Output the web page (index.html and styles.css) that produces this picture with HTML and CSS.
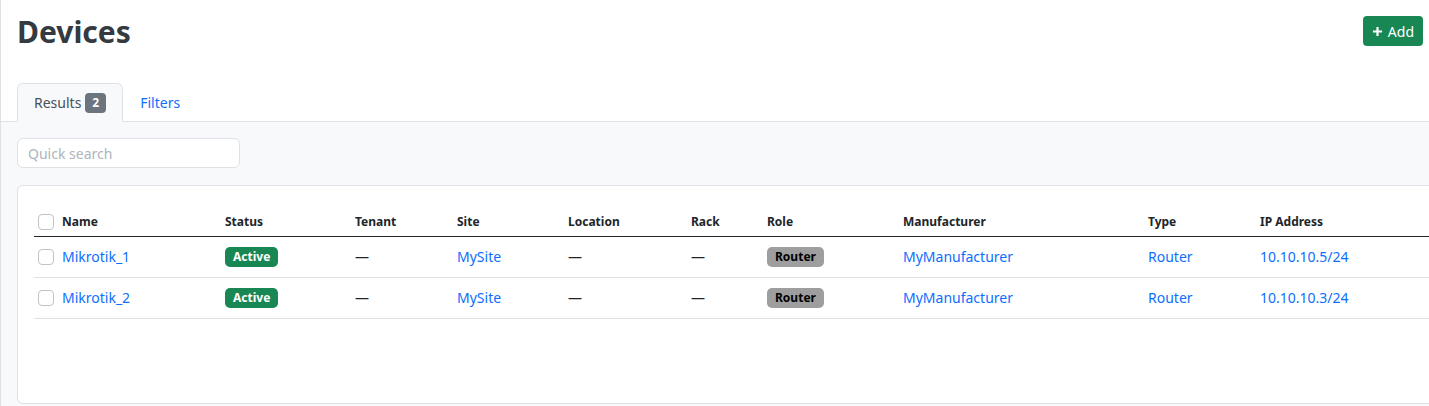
FILE: index.html
```html
<!DOCTYPE html>
<html lang="en">
<head>
<meta charset="utf-8">
<title>Devices</title>
<link rel="stylesheet" href="styles.css">
</head>
<body>
<div class="page">
  <header class="page-header">
    <h1 class="page-title">Devices</h1>
    <a class="btn-add" href="#">
      <svg class="plus" viewBox="0 0 12 12" width="11" height="11"><path d="M6 1v10M1 6h10" stroke="#fff" stroke-width="2.4" fill="none"/></svg>
      <span>Add</span>
    </a>
  </header>
  <nav class="tabs">
    <a class="tab tab-active" href="#">Results <span class="count">2</span></a>
    <a class="tab" href="#">Filters</a>
  </nav>
  <main class="content">
    <input class="search" type="text" placeholder="Quick search">
    <div class="card">
      <table class="devices">
        <colgroup>
          <col class="c-check"><col class="c-name"><col class="c-status"><col class="c-tenant"><col class="c-site"><col class="c-location"><col class="c-rack"><col class="c-role"><col class="c-mfr"><col class="c-type"><col class="c-ip">
        </colgroup>
        <thead>
          <tr>
            <th><span class="cb"></span></th>
            <th>Name</th><th>Status</th><th>Tenant</th><th>Site</th><th>Location</th><th>Rack</th><th>Role</th><th>Manufacturer</th><th>Type</th><th>IP Address</th>
          </tr>
        </thead>
        <tbody>
          <tr>
            <td><span class="cb"></span></td>
            <td><a href="#">Mikrotik_1</a></td>
            <td><span class="badge badge-green">Active</span></td>
            <td>—</td>
            <td><a href="#">MySite</a></td>
            <td>—</td>
            <td>—</td>
            <td><span class="badge badge-gray">Router</span></td>
            <td><a href="#">MyManufacturer</a></td>
            <td><a href="#">Router</a></td>
            <td><a href="#">10.10.10.5/24</a></td>
          </tr>
          <tr>
            <td><span class="cb"></span></td>
            <td><a href="#">Mikrotik_2</a></td>
            <td><span class="badge badge-green">Active</span></td>
            <td>—</td>
            <td><a href="#">MySite</a></td>
            <td>—</td>
            <td>—</td>
            <td><span class="badge badge-gray">Router</span></td>
            <td><a href="#">MyManufacturer</a></td>
            <td><a href="#">Router</a></td>
            <td><a href="#">10.10.10.3/24</a></td>
          </tr>
        </tbody>
      </table>
    </div>
  </main>
</div>
</body>
</html>
```

FILE: styles.css
```css
* { box-sizing: border-box; }
html, body { margin: 0; padding: 0; height: 100%; }
body {
  font-family: "Noto Sans", "Open Sans", sans-serif;
  color: #212529;
  background: #fff;
  overflow: hidden;
  font-size: 14px;
}
.page {
  min-height: 100%;
  border-left: 1px solid #dee2e6;
  display: flex;
  flex-direction: column;
}
.page-header {
  display: flex;
  justify-content: space-between;
  align-items: flex-start;
  padding: 16px 6px 0 16px;
  height: 83px;
}
.page-title {
  margin: 0;
  font-size: 30px;
  font-weight: 700;
  color: #343a40;
  line-height: 32px;
}
.btn-add {
  display: flex;
  align-items: center;
  gap: 5px;
  height: 30px;
  padding: 0 9px 0 9px;
  background: #198754;
  color: #fff;
  border-radius: 4px;
  text-decoration: none;
  font-size: 14px;
}
.tabs {
  display: flex;
  padding-left: 16px;
  border-bottom: 1px solid #dee2e6;
  height: 39px;
}
.tab {
  display: flex;
  align-items: center;
  gap: 4px;
  padding: 0 16px;
  color: #0d6efd;
  text-decoration: none;
  font-size: 14px;
  border: 1px solid transparent;
  border-radius: 6px 6px 0 0;
  margin-bottom: -1px;
}
.tab-active {
  color: #495057;
  background: #f8f9fa;
  border-color: #dee2e6 #dee2e6 #f8f9fa;
}
.count {
  display: inline-block;
  background: #6c757d;
  color: #fff;
  font-weight: 700;
  font-size: 12px;
  line-height: 20px;
  padding: 0 7px;
  border-radius: 4px;
}
.content {
  flex: 1;
  background: #f8f9fa;
  padding: 16px 0 0 16px;
  overflow: hidden;
}
.search {
  display: block;
  width: 223px;
  height: 30px;
  border: 1px solid #dee2e6;
  border-radius: 6px;
  background: #fff;
  padding: 0 10px;
  font-family: inherit;
  font-size: 14px;
  color: #212529;
}
.search::placeholder { color: #adb5bd; }
.card {
  margin-top: 17px;
  width: 1500px;
  height: 219px;
  background: #fff;
  border: 1px solid #dee2e6;
  border-radius: 6px;
  padding: 18px 16px 0 16px;
}
.devices {
  border-collapse: collapse;
  table-layout: fixed;
  width: 1444px;
}
.c-check { width: 24px; }
.c-name { width: 163px; }
.c-status { width: 130px; }
.c-tenant { width: 102px; }
.c-site { width: 111px; }
.c-location { width: 123px; }
.c-rack { width: 76px; }
.c-role { width: 136px; }
.c-mfr { width: 245px; }
.c-type { width: 112px; }
.c-ip { width: 222px; }
.devices th {
  text-align: left;
  font-size: 12px;
  font-weight: 700;
  height: 32px;
  padding: 4px 4px 0;
  vertical-align: middle;
  border-bottom: 1.5px solid #212529;
  white-space: nowrap;
}
.devices td {
  height: 41px;
  padding: 0 4px;
  border-bottom: 1px solid #dee2e6;
  vertical-align: middle;
  white-space: nowrap;
}
.devices a { color: #0d6efd; text-decoration: none; }
.cb {
  display: block;
  width: 16px;
  height: 16px;
  border: 1px solid #bfc4c9;
  border-radius: 4px;
  background: #fff;
}
.badge {
  display: inline-block;
  font-size: 12px;
  font-weight: 700;
  line-height: 20px;
  padding: 0 8px;
  border-radius: 5px;
}
.badge-green { background: #198754; color: #fff; }
.badge-gray { background: #9e9e9e; color: #000; }
```
